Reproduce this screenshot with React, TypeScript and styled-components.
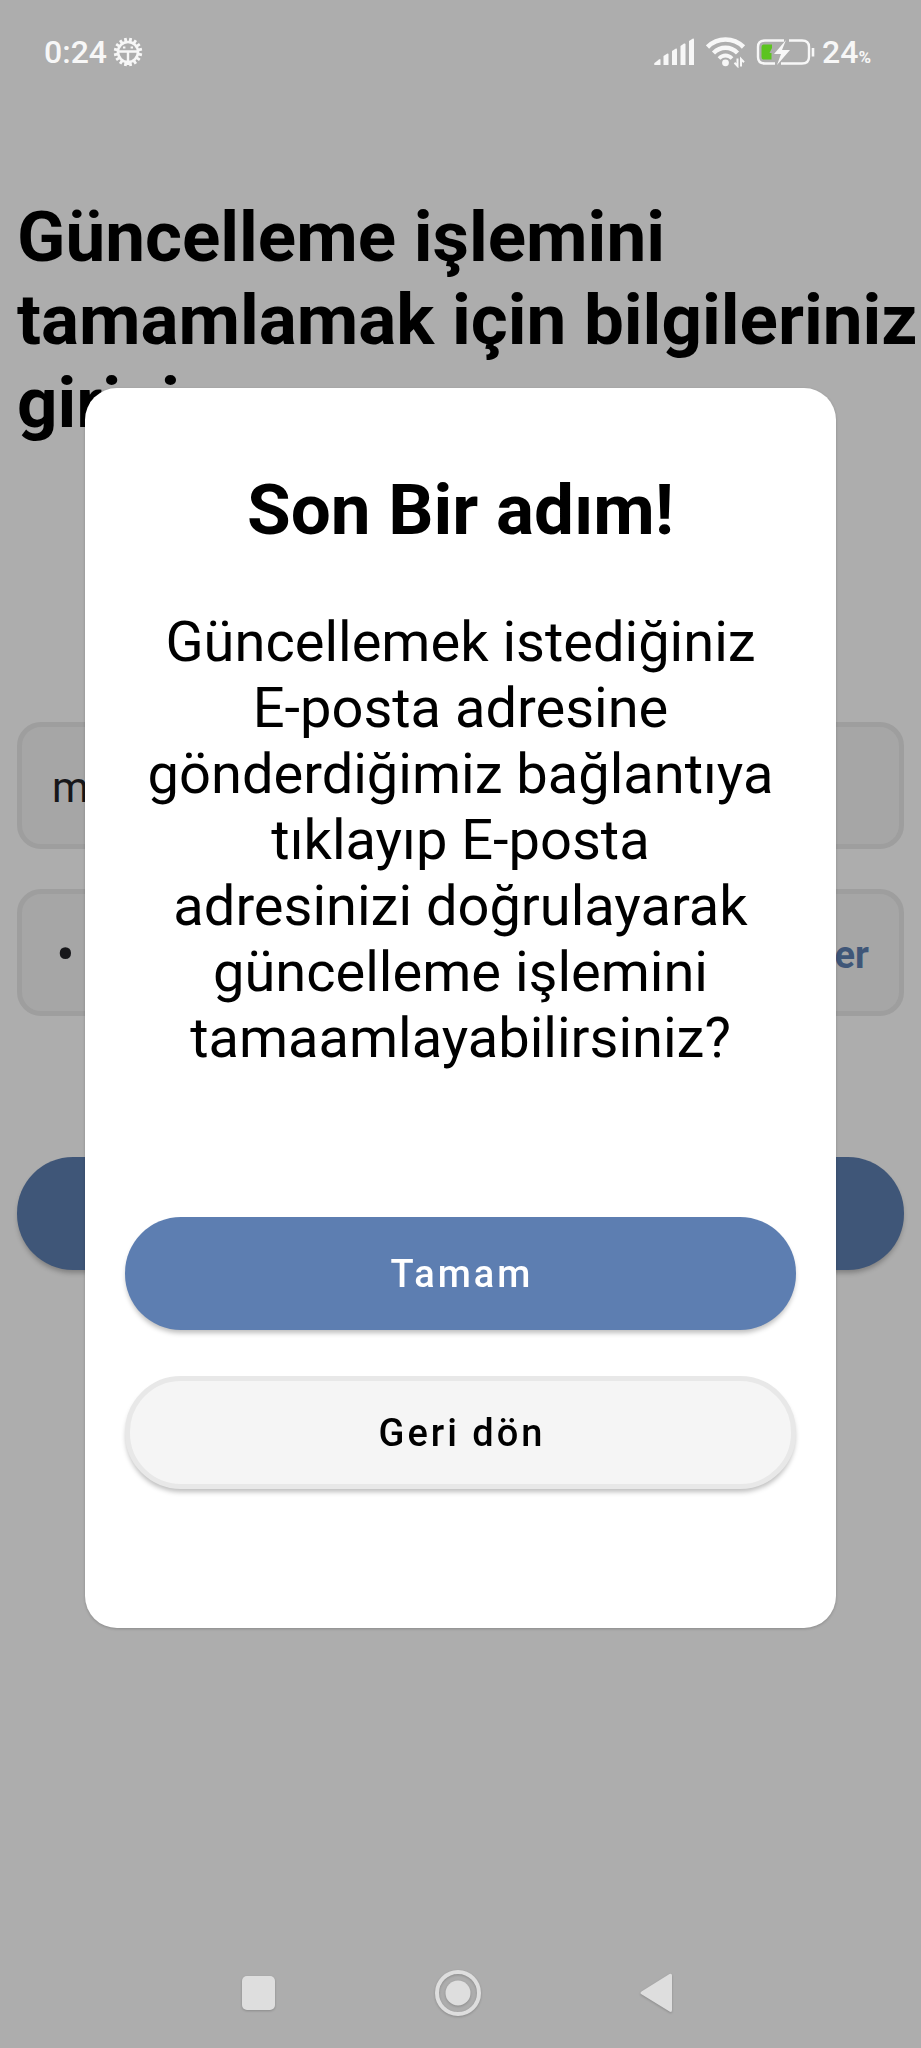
import React from "react";
import styled, { createGlobalStyle } from "styled-components";

const GlobalStyle = createGlobalStyle`
  *, *::before, *::after { box-sizing: border-box; }
  html, body, #root { height: 100%; }
  body {
    margin: 0;
    background: #adadad;
    font-family: Roboto, "Liberation Sans", sans-serif;
  }
  button, input { font-family: inherit; }
`;

const Screen = styled.div`
  display: flex;
  flex-direction: column;
  min-height: 100%;
  overflow: hidden;
`;

const StatusBar = styled.header`
  display: flex;
  align-items: center;
  justify-content: space-between;
  height: 104px;
  padding: 0 50px 0 44px;
  color: #f7f7f7;
  font-size: 32px;
  font-weight: 500;
  line-height: 40px;
`;

const StatusGroup = styled.div<{ $gap: number }>`
  display: flex;
  align-items: center;
  gap: ${(p) => p.$gap}px;
`;

const Percent = styled.span`
  font-size: 17px;
  font-weight: 700;
  line-height: 1;
`;

const Content = styled.main`
  flex: 1;
  display: flex;
  flex-direction: column;
  padding: 91px 17px 0;
`;

const PageTitle = styled.h1`
  margin: 0 -17px 278px 0;
  min-height: 249px;
  font-size: 71px;
  font-weight: 700;
  line-height: 83px;
  color: #000;
`;

const Form = styled.form`
  display: flex;
  flex-direction: column;
  gap: 40px;
`;

const Field = styled.label`
  display: flex;
  align-items: center;
  height: 127px;
  padding: 4px 30px 0;
  border: 5px solid #9e9e9e;
  border-radius: 24px;
  background: #a6a6a6;
`;

const FieldInput = styled.input`
  flex: 1;
  min-width: 0;
  padding: 0;
  border: 0;
  outline: 0;
  background: transparent;
  color: #17171a;
  font-size: 42px;

  &[type="password"] {
    padding-left: 4px;
    font-size: 56px;
  }
`;

const RevealButton = styled.button`
  padding: 0;
  border: 0;
  background: transparent;
  color: #3f5678;
  font-size: 38px;
  font-weight: 700;
`;

const Pill = styled.button<{ $tone: "primary" | "dimmed" | "plain" }>`
  width: 100%;
  height: 113px;
  border: ${(p) => (p.$tone === "plain" ? "5px solid #e8e8e8" : "0")};
  border-radius: 56px;
  background: ${(p) =>
    ({ primary: "#5d7eb1", dimmed: "#3f5678", plain: "#f5f5f5" })[p.$tone]};
  color: ${(p) => (p.$tone === "plain" ? "#000" : "#fff")};
  font-size: 38px;
  font-weight: 500;
  letter-spacing: 3px;
  text-indent: 3px;
  box-shadow: 0 4px 5px -1px rgba(0, 0, 0, 0.26);
`;

const SubmitRow = styled.div`
  padding-top: 101px;
`;

const NavBar = styled.nav`
  display: flex;
  align-items: center;
  justify-content: space-between;
  height: 110px;
  padding: 0 248px 0 240px;
`;

const NavButton = styled.button`
  display: flex;
  padding: 0;
  border: 0;
  background: transparent;
  color: #dedede;
  filter: drop-shadow(0 1px 1px rgba(0, 0, 0, 0.2));
`;

const Overlay = styled.div`
  position: fixed;
  inset: 0;
  display: flex;
  align-items: center;
  padding: 0 85px 32px;
`;

const Dialog = styled.section`
  width: 100%;
  padding: 80px 40px 139px;
  border-radius: 32px;
  background: #fff;
  box-shadow: 0 1px 3px rgba(0, 0, 0, 0.2);
  text-align: center;
  color: #000;
`;

const DialogTitle = styled.h2`
  margin: 0 0 58px;
  font-size: 71px;
  font-weight: 700;
  line-height: 83px;
`;

const DialogText = styled.p`
  margin: 0 0 146px;
  padding: 0 21px;
  font-size: 56px;
  line-height: 66px;
`;

const Actions = styled.div`
  display: flex;
  flex-direction: column;
  gap: 46px;
`;

const teeth = Array.from({ length: 16 }, (_, i) => i * 22.5 + 11.25);

const GearIcon = () => (
  <svg width="30" height="30" viewBox="0 0 30 30" fill="none" stroke="currentColor">
    <circle cx="15" cy="15" r="10" strokeWidth="2.6" />
    {teeth.map((a) => (
      <path key={a} d="M15 5.2V.8" strokeWidth="2.8" transform={`rotate(${a} 15 15)`} />
    ))}
    <path d="M5 14.5H25M15 14.5V28" strokeWidth="2.4" />
    <path d="M10 10.4h2.4M17.6 10.4H20" strokeWidth="2" />
  </svg>
);

const SignalIcon = () => (
  <svg width="42" height="28" viewBox="0 0 42 28" fill="currentColor">
    <path d="M0.5 25L5 21.5Q6.5 20.5 6.5 22V27H1Q-.5 27 0.5 25Z" />
    <path d="M9.5 18L13 15.8Q14.5 15 14.5 16.5V27H9.5Z" />
    <path d="M18 13L21.5 10.7Q23 10 23 11.5V27H18Z" />
    <path d="M26.5 8L30 5.6Q31.5 5 31.5 6.5V27H26.5Z" />
    <path d="M35 3L38.5 .7Q40 0 40 1.5V27H35Z" />
  </svg>
);

const WifiIcon = () => (
  <svg width="40" height="32" viewBox="0 0 40 32" fill="none" stroke="currentColor">
    <path d="M1.5 11C11.5 1 27.5 1 37.5 11" strokeWidth="4.6" />
    <path d="M7.5 17C14.5 10 24.5 10 31.5 17" strokeWidth="4.4" />
    <path d="M13 22.5C17 18.5 22 18.5 26 22.5" strokeWidth="3.8" />
    <circle cx="19.5" cy="26.8" r="3.4" fill="currentColor" stroke="none" />
    <path d="M31.5 22.5V30L28.5 26.8M35 30.5V23L38 26.2" strokeWidth="2" />
  </svg>
);

const BatteryIcon = () => (
  <svg width="60" height="28" viewBox="0 0 60 28">
    <path
      d="M28 2.5H9Q2 2.5 2 9V19Q2 25.5 9 25.5H19M33 2.5H46Q53 2.5 53 9V19Q53 25.5 46 25.5H25"
      fill="none"
      stroke="currentColor"
      strokeWidth="2.4"
    />
    <path
      d="M7.5 6.5H16V10L13.5 15H15.5V21.5H7.5Q5.5 21.5 5.5 19V9Q5.5 6.5 7.5 6.5Z"
      fill="#5cc41f"
    />
    <path d="M30 2L18 16H25L21 27L34 12H26Z" fill="currentColor" />
    <path d="M57 10V18.5" stroke="currentColor" strokeWidth="2.6" />
  </svg>
);

export default function App() {
  return (
    <>
      <GlobalStyle />
      <Screen>
        <StatusBar>
          <StatusGroup $gap={6}>
            <span>0:24</span>
            <GearIcon />
          </StatusGroup>
          <StatusGroup $gap={10}>
            <SignalIcon />
            <WifiIcon />
            <StatusGroup $gap={6}>
              <BatteryIcon />
              <span>
                24<Percent>%</Percent>
              </span>
            </StatusGroup>
          </StatusGroup>
        </StatusBar>
        <Content>
          <PageTitle>Güncelleme işlemini tamamlamak için bilgileriniz giriniz</PageTitle>
          <Form onSubmit={(e: React.FormEvent) => e.preventDefault()}>
            <Field>
              <FieldInput type="text" aria-label="E-posta" defaultValue="m" />
            </Field>
            <Field>
              <FieldInput type="password" aria-label="Şifre" defaultValue="m" />
              <RevealButton type="button">Göster</RevealButton>
            </Field>
            <SubmitRow>
              <Pill type="submit" $tone="dimmed" aria-label="Güncelle" />
            </SubmitRow>
          </Form>
        </Content>
        <NavBar>
          <NavButton type="button" aria-label="Son uygulamalar">
            <svg width="36" height="36" viewBox="0 0 36 36" fill="currentColor">
              <rect x="2" y="1" width="33" height="34" rx="5" />
            </svg>
          </NavButton>
          <NavButton type="button" aria-label="Ana ekran">
            <svg width="48" height="48" viewBox="0 0 48 48" fill="currentColor">
              <circle cx="24" cy="24" r="21" fill="none" stroke="currentColor" strokeWidth="4" />
              <circle cx="24" cy="24" r="12.5" />
            </svg>
          </NavButton>
          <NavButton type="button" aria-label="Geri">
            <svg width="34" height="40" viewBox="0 0 34 40" fill="currentColor">
              <path d="M2.5 18.5L30.5 1Q33 0 33 2.5V37Q33 39.8 30.5 38.5L2.5 21.2Q.5 20 2.5 18.5Z" />
            </svg>
          </NavButton>
        </NavBar>
      </Screen>
      <Overlay>
        <Dialog role="dialog" aria-modal="true" aria-labelledby="dialog-title">
          <DialogTitle id="dialog-title">Son Bir adım!</DialogTitle>
          <DialogText>
            Güncellemek istediğiniz E-posta adresine gönderdiğimiz bağlantıya tıklayıp E-posta
            adresinizi doğrulayarak güncelleme işlemini tamaamlayabilirsiniz?
          </DialogText>
          <Actions>
            <Pill type="button" $tone="primary">
              Tamam
            </Pill>
            <Pill type="button" $tone="plain">
              Geri dön
            </Pill>
          </Actions>
        </Dialog>
      </Overlay>
    </>
  );
}
